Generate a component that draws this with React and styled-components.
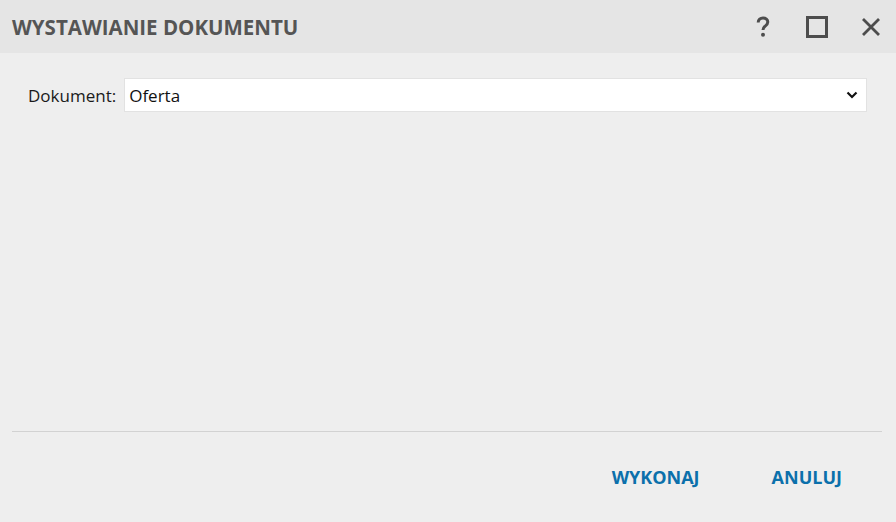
import React from 'react';
import styled, {createGlobalStyle} from 'styled-components';

const Global = createGlobalStyle`
  html, body {
    margin: 0;
    padding: 0;
    background: #eeeeee;
    font-family: "Open Sans", "Noto Sans", sans-serif;
  }
`;

const Dialog = styled.div`
  width: 896px;
  height: 522px;
  display: flex;
  flex-direction: column;
  background: #eeeeee;
`;

const TitleBar = styled.div`
  height: 53px;
  display: flex;
  align-items: center;
  justify-content: space-between;
  background: #e5e5e5;
  padding: 0 9px 0 12px;
  box-sizing: border-box;
`;

const Title = styled.h1`
  margin: 0;
  font-size: 20.5px;
  font-weight: 700;
  color: #555555;
`;

const Controls = styled.div`
  display: flex;
  align-items: center;
  gap: 22px;
`;

const IconButton = styled.button`
  border: none;
  background: none;
  padding: 0;
  width: 32px;
  height: 32px;
  display: flex;
  align-items: center;
  justify-content: center;
  cursor: pointer;
  color: #4d4d4d;
`;

const Content = styled.div`
  flex: 1;
  padding: 25px 29px 0 28px;
`;

const FieldRow = styled.div`
  display: flex;
  align-items: center;
  gap: 8px;
`;

const Label = styled.label`
  font-size: 17px;
  color: #1a1a1a;
`;

const SelectBox = styled.div`
  flex: 1;
  height: 34px;
  display: flex;
  align-items: center;
  justify-content: space-between;
  background: #ffffff;
  border: 1px solid #e2e2e2;
  box-sizing: border-box;
  padding: 0 8px 0 4px;
  font-size: 17px;
  color: #111;
`;

const Divider = styled.hr`
  margin: 0 14px 0 12px;
  border: none;
  border-top: 1px solid #d2d2d2;
`;

const Footer = styled.div`
  height: 90px;
  display: flex;
  justify-content: flex-end;
  align-items: center;
  gap: 72px;
  padding-right: 54px;
`;

const ActionButton = styled.button`
  border: none;
  background: none;
  padding: 0;
  font-family: inherit;
  font-size: 18px;
  font-weight: 700;
  color: #0b70ab;
  cursor: pointer;
`;

export default function App() {
  return (
    <Dialog>
      <Global />
      <TitleBar>
        <Title>WYSTAWIANIE DOKUMENTU</Title>
        <Controls>
          <IconButton aria-label="Pomoc">
            <svg width="14" height="22" viewBox="0 0 14 22">
              <path d="M2.2 6.5 C2.2 3.6 4.3 2 7 2 C9.8 2 11.8 3.6 11.8 6.1 C11.8 8.4 10.3 9.4 8.8 10.5 C7.6 11.4 7 12.1 7 14" fill="none" stroke="currentColor" strokeWidth="3" />
              <circle cx="7" cy="18.8" r="2" fill="currentColor" />
            </svg>
          </IconButton>
          <IconButton aria-label="Maksymalizuj">
            <svg width="22" height="22" viewBox="0 0 22 22">
              <rect x="1.5" y="1.5" width="19" height="19" fill="none" stroke="currentColor" strokeWidth="3" />
            </svg>
          </IconButton>
          <IconButton aria-label="Zamknij">
            <svg width="20" height="20" viewBox="0 0 20 20">
              <path d="M2 2 L18 18 M18 2 L2 18" fill="none" stroke="currentColor" strokeWidth="2.8" />
            </svg>
          </IconButton>
        </Controls>
      </TitleBar>
      <Content>
        <FieldRow>
          <Label>Dokument:</Label>
          <SelectBox>
            <span>Oferta</span>
            <svg width="12" height="8" viewBox="0 0 12 8">
              <path d="M1.5 1.5 L6 6 L10.5 1.5" fill="none" stroke="#111" strokeWidth="2.2" />
            </svg>
          </SelectBox>
        </FieldRow>
      </Content>
      <Divider />
      <Footer>
        <ActionButton>WYKONAJ</ActionButton>
        <ActionButton>ANULUJ</ActionButton>
      </Footer>
    </Dialog>
  );
}
